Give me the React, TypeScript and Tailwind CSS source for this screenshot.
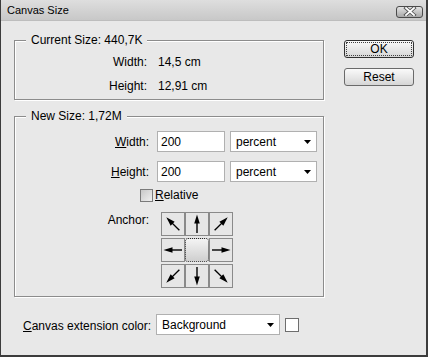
import React from "react";

const Arrow = ({ rot }: { rot: number }) => (
  <svg width="22" height="22" viewBox="0 0 22 22">
    <g transform={`rotate(${rot} 11 11)`}>
      <line x1="11" y1="20" x2="11" y2="8" stroke="#000" strokeWidth="1.4" />
      <polygon points="11,1.5 8.2,10.5 13.8,10.5" fill="#000" />
    </g>
  </svg>
);

const Caret = () => (
  <svg width="7" height="4" viewBox="0 0 7 4">
    <polygon points="0,0 7,0 3.5,4" fill="#000" />
  </svg>
);

const Cell = ({ rot }: { rot: number }) => (
  <div className="w-[24px] h-[24px] border border-[#8a8a8a] bg-[#e6e6e6] flex items-center justify-center">
    <Arrow rot={rot} />
  </div>
);

export default function App() {
  return (
    <div className="w-[428px] h-[357px] bg-[#e8e8e8] border-l border-r-2 border-b-2 border-[#3c3c3c] flex flex-col font-['Liberation_Sans',Arial,sans-serif] text-[12px] text-black leading-[14px] overflow-hidden">
      {/* Title bar */}
      <div className="h-[21px] shrink-0 flex items-center justify-between pl-[6px] pr-[3px] bg-gradient-to-b from-[#dedede] to-[#c8c8c8] border-b border-[#bdbdbd]">
        <span className="text-[11px] leading-[13px] mt-[1px]">Canvas Size</span>
        <div className="mt-[3px] w-[27px] h-[12px] rounded-[3px] border border-[#4a4a4a] bg-gradient-to-b from-[#e4e4e4] to-[#a8a8a8] flex items-center justify-center">
          <svg width="14" height="9" viewBox="0 0 14 9">
            <path d="M3 1 L11 8 M11 1 L3 8" stroke="#555" strokeWidth="3.6" strokeLinecap="square" />
            <path d="M3 1 L11 8 M11 1 L3 8" stroke="#fff" strokeWidth="1.8" strokeLinecap="square" />
          </svg>
        </div>
      </div>

      {/* Body */}
      <div className="flex pl-[13px] pt-[19px]">
        <div className="w-[310px] flex flex-col">
          {/* Current size group */}
          <div className="relative h-[60px] border border-[#8c8c8c] shadow-[1px_1px_0_#fff,inset_1px_1px_0_#fff] pt-[9px]">
            <span className="absolute left-[11px] -top-[8px] px-[5px] bg-[#e8e8e8]">Current Size: 440,7K</span>
            <div className="flex items-center h-[24px]">
              <span className="w-[132px] text-right">Width:</span>
              <span className="ml-[11px]">14,5 cm</span>
            </div>
            <div className="flex items-center h-[24px]">
              <span className="w-[132px] text-right">Height:</span>
              <span className="ml-[11px]">12,91 cm</span>
            </div>
          </div>

          {/* New size group */}
          <div className="relative mt-[16px] h-[181px] border border-[#8c8c8c] shadow-[1px_1px_0_#fff,inset_1px_1px_0_#fff] pt-[14px]">
            <span className="absolute left-[11px] -top-[8px] px-[5px] bg-[#e8e8e8]">New Size: 1,72M</span>
            <div className="flex items-center h-[21px]">
              <span className="w-[134px] text-right">
                <span className="underline">W</span>idth:
              </span>
              <div className="ml-[8px] w-[68px] h-[21px] bg-white border border-[#b0b0b0] flex items-center pl-[3px]">200</div>
              <div className="ml-[5px] w-[87px] h-[21px] bg-white border border-[#b0b0b0] flex items-center justify-between pl-[5px] pr-[5px]">
                <span>percent</span>
                <Caret />
              </div>
            </div>
            <div className="flex items-center h-[21px] mt-[9px]">
              <span className="w-[134px] text-right">
                <span className="underline">H</span>eight:
              </span>
              <div className="ml-[8px] w-[68px] h-[21px] bg-white border border-[#b0b0b0] flex items-center pl-[3px]">200</div>
              <div className="ml-[5px] w-[87px] h-[21px] bg-white border border-[#b0b0b0] flex items-center justify-between pl-[5px] pr-[5px]">
                <span>percent</span>
                <Caret />
              </div>
            </div>
            <div className="flex items-center h-[16px] mt-[5px] pl-[125px]">
              <div className="w-[13px] h-[13px] border border-[#7a7a7a] bg-gradient-to-br from-[#c8c8c8] to-[#f0f0f0]" />
              <span className="ml-[2px]">
                <span className="underline">R</span>elative
              </span>
            </div>
            <div className="flex items-start mt-[9px]">
              <span className="w-[134px] text-right mt-[1px]">Anchor:</span>
              <div className="ml-[12px] grid grid-cols-[24px_24px_24px] gap-y-[2px]">
                <Cell rot={315} />
                <Cell rot={0} />
                <Cell rot={45} />
                <Cell rot={270} />
                <div className="w-[24px] h-[24px] rounded-[3px] border border-dotted border-[#2a2a2a] bg-gradient-to-b from-[#f4f4f4] to-[#cfcfcf]" />
                <Cell rot={90} />
                <Cell rot={225} />
                <Cell rot={180} />
                <Cell rot={135} />
              </div>
            </div>
          </div>

          {/* Canvas extension color */}
          <div className="flex items-center mt-[17px] pl-[9px]">
            <span className="w-[133px] whitespace-nowrap mt-[2px]">
              <span className="underline">C</span>anvas extension color:
            </span>
            <div className="w-[124px] h-[21px] bg-white border border-[#b0b0b0] flex items-center justify-between pl-[5px] pr-[5px]">
              <span>Background</span>
              <Caret />
            </div>
            <div className="ml-[5px] w-[14px] h-[14px] bg-white border border-[#6e6e6e]" />
          </div>
        </div>

        {/* Buttons */}
        <div className="ml-[20px] flex flex-col gap-[10px]">
          <div className="w-[70px] h-[18px] rounded-[3px] border border-[#303030] bg-gradient-to-b from-[#fafafa] to-[#d6d6d6] p-[1px]">
            <div className="w-full h-full border border-dotted border-[#404040] flex items-center justify-center">OK</div>
          </div>
          <div className="w-[70px] h-[18px] rounded-[3px] border border-[#6a6a6a] bg-gradient-to-b from-[#fafafa] to-[#d6d6d6] flex items-center justify-center">
            Reset
          </div>
        </div>
      </div>
    </div>
  );
}
